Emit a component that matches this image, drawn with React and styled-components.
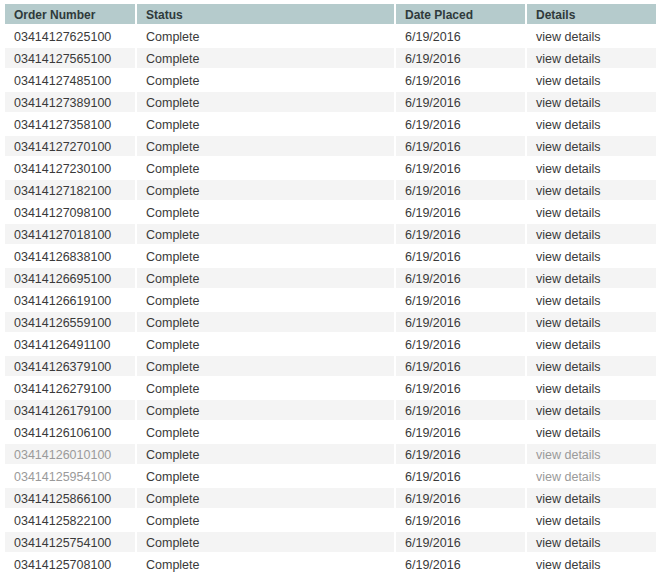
import React from "react"
import styled, { createGlobalStyle } from "styled-components"

const GlobalStyle = createGlobalStyle`
  body {
    margin: 0;
    background: #fff;
    font-family: "Liberation Sans", Arial, sans-serif;
  }
`

const Wrapper = styled.div`
  padding: 4px 2px 0 5px;
`

const Grid = styled.div`
  display: grid;
  grid-template-columns: 130px 257px 129px 129px;
  grid-auto-rows: 20px;
  gap: 2px;
`

const HeadCell = styled.div`
  display: flex;
  align-items: center;
  padding: 2px 0 0 9px;
  background: #b5cbcc;
  color: #2f3a3b;
  font-size: 12px;
  font-weight: bold;
`

const Cell = styled.div`
  display: flex;
  align-items: center;
  padding: 2px 0 0 9px;
  background: ${(p) => (p.$alt ? "#f4f4f4" : "#fff")};
  color: ${(p) => (p.$faded ? "#9a9a9a" : "#3a3a3a")};
  font-size: 12.5px;
  white-space: nowrap;
`

const orders = [
  "03414127625100",
  "03414127565100",
  "03414127485100",
  "03414127389100",
  "03414127358100",
  "03414127270100",
  "03414127230100",
  "03414127182100",
  "03414127098100",
  "03414127018100",
  "03414126838100",
  "03414126695100",
  "03414126619100",
  "03414126559100",
  "03414126491100",
  "03414126379100",
  "03414126279100",
  "03414126179100",
  "03414126106100",
  "03414126010100",
  "03414125954100",
  "03414125866100",
  "03414125822100",
  "03414125754100",
  "03414125708100",
]

const faded = ["03414126010100", "03414125954100"]

const App = () => (
  <>
    <GlobalStyle />
    <Wrapper>
      <Grid>
        <HeadCell>Order Number</HeadCell>
        <HeadCell>Status</HeadCell>
        <HeadCell>Date Placed</HeadCell>
        <HeadCell>Details</HeadCell>
        {orders.map((num, i) => {
          const alt = i % 2 === 1
          const dim = faded.includes(num)
          return (
            <React.Fragment key={num}>
              <Cell $alt={alt} $faded={dim}>{num}</Cell>
              <Cell $alt={alt}>Complete</Cell>
              <Cell $alt={alt}>6/19/2016</Cell>
              <Cell $alt={alt} $faded={dim}>view details</Cell>
            </React.Fragment>
          )
        })}
      </Grid>
    </Wrapper>
  </>
)

export default App
